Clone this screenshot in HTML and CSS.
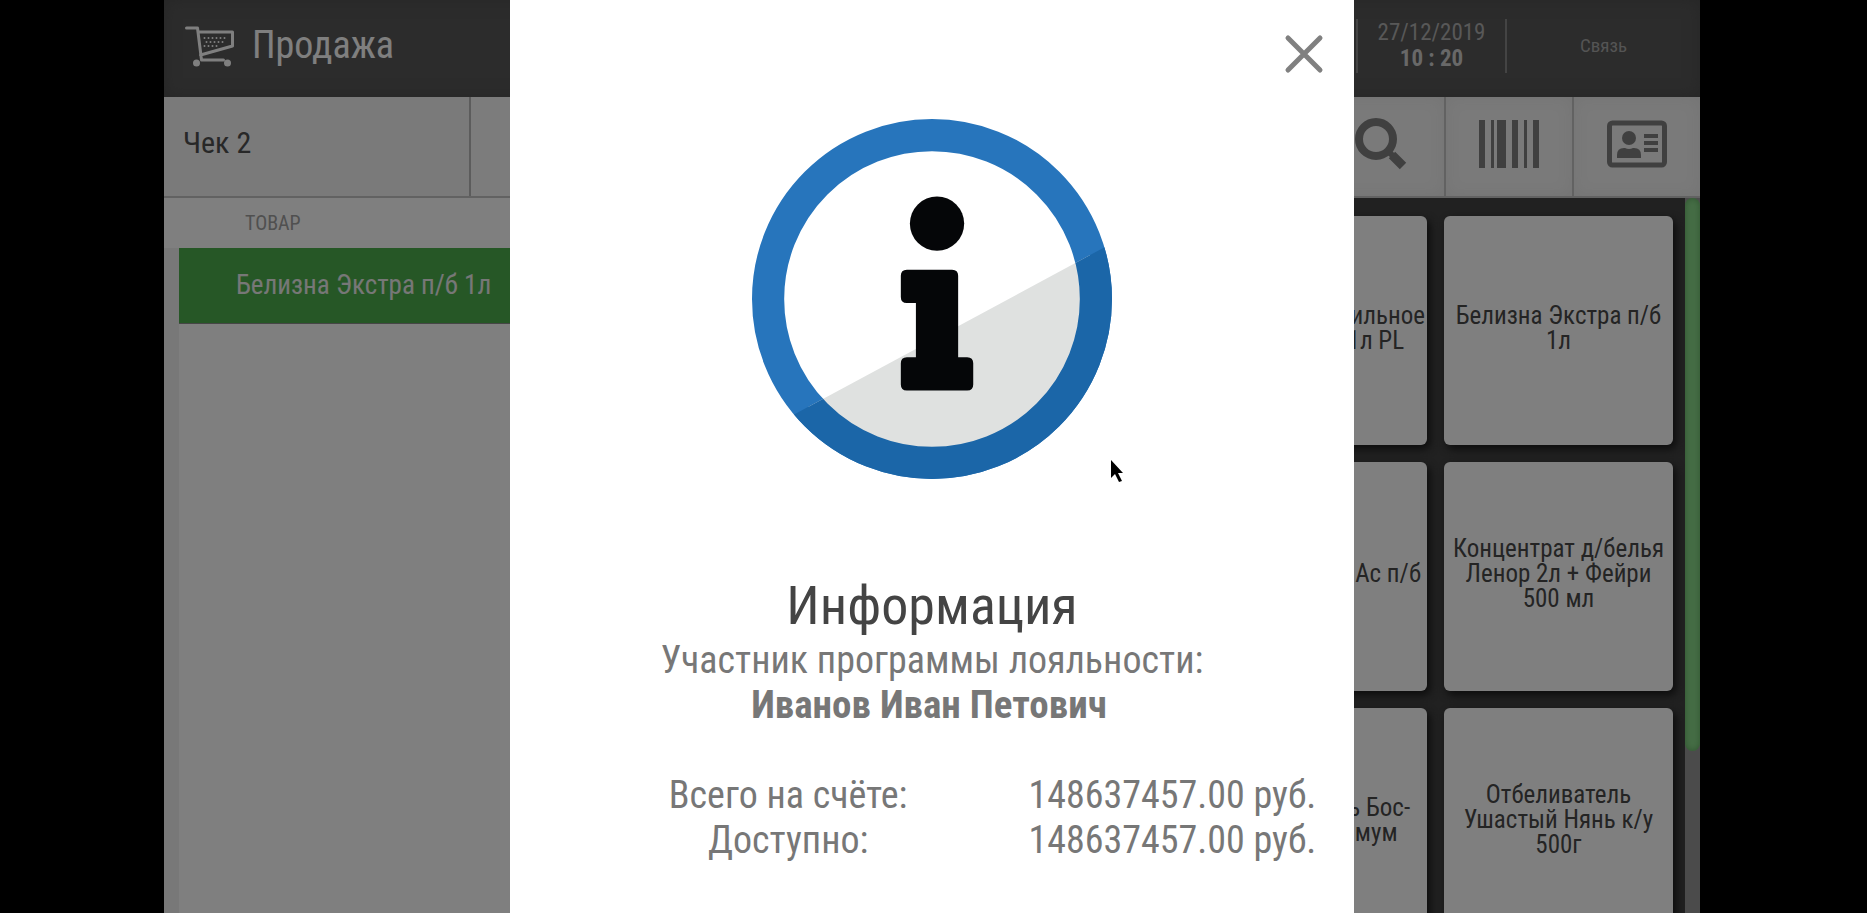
FILE: index.html
```html
<!DOCTYPE html>
<html lang="ru">
<head>
<meta charset="utf-8">
<title>Продажа</title>
<link rel="stylesheet" href="styles.css">
</head>
<body>
<div class="app">
  <header class="header">
    <svg class="cart" viewBox="0 0 49 42" fill="none" stroke="currentColor" stroke-width="3" stroke-linecap="round" stroke-linejoin="round">
      <path d="M2 3h11l4 32h22M14 7h34v14L16 30"/>
      <path d="M20 13h23M22 17h18M20 21h13" stroke-width="2" stroke-dasharray="0 4"/>
      <circle cx="12" cy="38" r="3.500" fill="currentColor" stroke="none"/>
      <circle cx="43" cy="38" r="3.500" fill="currentColor" stroke="none"/>
    </svg>
    <h1 class="header-title">Продажа</h1>
    <div class="clock"><span>27/12/2019</span><b>10 : 20</b></div>
    <div class="link-state">Связь</div>
  </header>

  <nav class="toolbar">
    <button class="tab" type="button">Чек 2</button>
    <button class="tab tab-idle" type="button" aria-label="Новый чек"></button>
    <button class="tool" type="button" aria-label="Поиск">
      <svg width="52" height="52" viewBox="0 0 52 52" fill="none" stroke="currentColor"><circle cx="21" cy="21" r="17" stroke-width="8"/><path d="M32 32l7 7" stroke-width="6"/><path d="M37 37l11 11" stroke-width="9"/></svg>
    </button>
    <button class="tool" type="button" aria-label="Штрихкод">
      <svg width="60" height="48" viewBox="0 0 60 48" fill="currentColor"><path d="M0 0h6v48H0zM12 0h3v48h-3zM18 0h9v48h-9zM33 0h6v48h-6zM45 0h3v48h-3zM54 0h6v48h-6z"/></svg>
    </button>
    <button class="tool" type="button" aria-label="Карта клиента">
      <svg width="60" height="48" viewBox="0 0 60 48" fill="currentColor"><rect x="2.500" y="3" width="55" height="42" rx="3" fill="none" stroke="currentColor" stroke-width="5"/><circle cx="22" cy="18" r="7"/><path d="M10 38v-3q0-7 7-7h1q4 2 8 0h1q7 0 7 7v3zM37 14h14v4H37zM37 21h14v4H37zM37 28h14v4H37z"/></svg>
    </button>
  </nav>

  <main class="content">
    <section class="receipt">
      <div class="receipt-head">ТОВАР</div>
      <div class="receipt-list"><div class="receipt-row">Белизна Экстра п/б 1л</div></div>
    </section>
    <section class="catalog">
      <div class="cards">
        <button class="card" type="button">Средство стабильное<br>для посуды 1л PL</button>
        <button class="card" type="button">Белизна Экстра п/б 1л</button>
        <button class="card" type="button">Отбеливатель Ас п/б</button>
        <button class="card" type="button">Концентрат д/белья Ленор 2л + Фейри 500 мл</button>
        <button class="card" type="button">Отбеливатель Бос-плюс Максимум</button>
        <button class="card" type="button">Отбеливатель Ушастый Нянь к/у 500г</button>
      </div>
      <div class="scroll"><div class="thumb"></div></div>
    </section>
  </main>

  <div class="overlay">
    <div class="modal" role="dialog" aria-modal="true" aria-labelledby="dialog-title">
      <button class="close" type="button" aria-label="Закрыть">
        <svg width="40" height="40" viewBox="0 0 40 40" stroke="currentColor" stroke-width="5" stroke-linecap="round"><path d="M4 4l32 32M36 4L4 36"/></svg>
      </button>
      <svg class="info" viewBox="1 1 358 358">
        <defs><clipPath id="shade"><path d="M0 318L360 124V360H0z"/></clipPath></defs>
        <circle cx="180" cy="180" r="163" fill="#fff" stroke="#2775bc" stroke-width="32"/>
        <g clip-path="url(#shade)"><circle cx="180" cy="180" r="163" fill="#dfe1e0" stroke="#1b66a8" stroke-width="32"/></g>
        <circle cx="185" cy="105" r="27" fill="#050608"/>
        <path d="M155 151h45q6 0 6 6v81h9q6 0 6 6v21q0 6-6 6h-60q-6 0-6-6v-21q0-6 6-6h9v-54h-9q-6 0-6-6v-21q0-6 6-6z" fill="#050608"/>
      </svg>
      <h2 class="title" id="dialog-title">Информация</h2>
      <p class="text">Участник программы лояльности:</p>
      <p class="text name">Иванов Иван Петович</p>
      <dl class="balance">
        <dt>Всего на счёте:</dt><dd>148637457.00 руб.</dd>
        <dt>Доступно:</dt><dd>148637457.00 руб.</dd>
      </dl>
    </div>
  </div>
</div>
<svg class="pointer" width="14" height="22" viewBox="0 0 14 22"><path d="M1 0v18l4-4 4 8 3-1-4-8h5z"/></svg>
</body>
</html>
```
FILE: styles.css
```css
* { box-sizing: border-box; }
body {
  margin: 0;
  height: 100vh;
  padding: 0 167px 0 164px;
  background: #000;
  font-family: "Roboto Condensed", Roboto, sans-serif;
  overflow: hidden;
}
button { border: 0; margin: 0; padding: 0; font: inherit; color: inherit; background: none; }
svg { display: block; }
h1, h2, p, dl, dd { margin: 0; font-weight: 400; }
.app { position: relative; height: 100%; display: flex; flex-direction: column; background: #fff; }
.header { height: 97px; flex: none; display: flex; align-items: center; background: #585858; color: #fff; padding-left: 20px; box-shadow: inset 0 0 16px #4c4c4c; }
.cart { width: 50px; height: 42px; margin-bottom: 6px; }
.header-title { flex: 1; padding-left: 18px; font-size: 38px; line-height: 48px; margin-bottom: 8px; }
.clock { width: 151px; height: 54px; margin-bottom: 6px; border: solid #888; border-width: 0 2px; display: flex; flex-direction: column; align-items: center; justify-content: center; font-size: 23px; line-height: 26px; color: #b0b0b0; }
.clock b { color: #d0d0d0; }
.link-state { width: 193px; text-align: center; font-size: 19px; color: #a8a8a8; margin-bottom: 6px; }
.toolbar { height: 101px; flex: none; display: flex; background: #f4f4f4; border-bottom: 2px solid #c4c4c4; }
.tab { width: 20%; padding: 0 19px 8px; text-align: left; font-size: 30px; color: #505050; border-right: 2px solid #b8b8b8; }
.tab-idle { flex: 1; background: #f8f8f8; }
.tool { width: 128px; display: flex; align-items: center; justify-content: center; color: #808080; border-left: 2px solid #c4c4c4; padding-bottom: 6px; box-shadow: inset 0 0 16px #e8e8e8; }
.content { flex: 1; min-height: 0; display: flex; }
.receipt { flex: 1; display: flex; flex-direction: column; background: #f0f0f0; }
.receipt-head { height: 50px; line-height: 50px; padding-left: 81px; font-size: 20px; color: #a0a0a0; background: #fff; }
.receipt-list { flex: 1; margin-left: 15px; background: #fff; }
.receipt-row { height: 76px; padding-left: 57px; font-size: 27px; line-height: 74px; color: #eee; background: #4cae4c; border-bottom: 1px solid #8c8c8c; }
.catalog { width: 520px; display: flex; justify-content: flex-end; background: #424242; overflow: hidden; }
.cards { display: grid; grid-template-columns: 229px 229px; grid-auto-rows: 229px; gap: 17px; padding: 18px 12px 0 0; }
.card { padding: 0 2px 6px; border-radius: 6px; background: #fff; box-shadow: 3px 4px 8px #181818; font-size: 25px; line-height: 25px; color: #484848; text-align: center; }
.scroll { width: 15px; background: #969696; }
.thumb { height: 553px; border-radius: 8px; background: #8ada8a; box-shadow: inset 0 0 6px #60a860; }
.overlay { position: absolute; inset: 0; display: flex; justify-content: center; background: rgba(0, 0, 0, 0.5); }
.modal { position: relative; width: 55%; background: #fff; display: flex; flex-direction: column; align-items: center; padding-top: 119px; color: #777; }
.close { position: absolute; top: 34px; right: 30px; color: #808080; }
.info { width: 360px; height: 360px; flex: none; }
.title { margin-top: 95px; font-size: 54px; line-height: 64px; color: #444; }
.text { font-size: 38px; line-height: 45px; }
.name { padding-right: 6px; font-size: 39px; font-weight: 700; }
.balance { margin-top: 45px; padding-right: 38px; align-self: flex-end; display: grid; grid-template-columns: auto auto; column-gap: 121px; font-size: 38px; line-height: 45px; text-align: center; }
.pointer { position: absolute; left: 1110px; top: 460px; }
```
